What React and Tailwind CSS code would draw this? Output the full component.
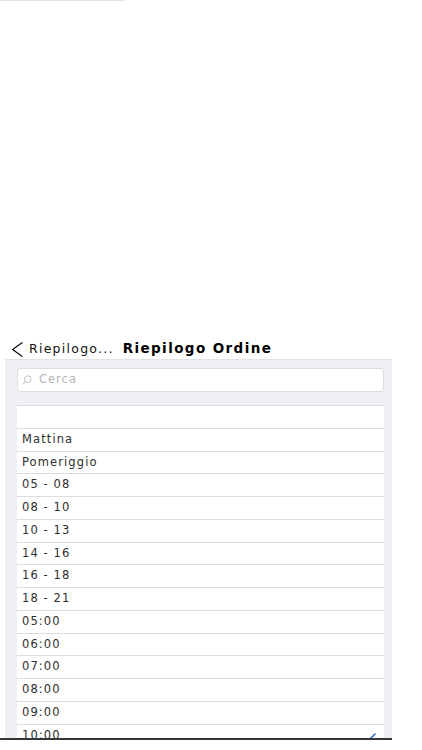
import React from 'react';

const rows = [
    '',
    'Mattina',
    'Pomeriggio',
    '05 - 08',
    '08 - 10',
    '10 - 13',
    '14 - 16',
    '16 - 18',
    '18 - 21',
    '05:00',
    '06:00',
    '07:00',
    '08:00',
    '09:00',
    '10:00',
];

const font = { fontFamily: '"DejaVu Sans", Verdana, sans-serif' };

export default function App() {
    return (
        <div className="w-[422px] h-[750px] bg-white overflow-hidden flex flex-col" style={font}>
            <div className="h-px w-[125px] bg-[#e4e4e4]" />

            {/* nav bar */}
            <div className="mt-[338px] h-[20px] flex items-center">
                <svg className="ml-[11px] w-[12px] h-[15px]" viewBox="0 0 12 15" fill="none">
                    <path d="M11 0.8 L1.6 7.5 L11 14.2" stroke="#111" strokeWidth="1.3" strokeLinecap="round" strokeLinejoin="round" />
                </svg>
                <span className="ml-[6px] text-[12.5px] tracking-[1.25px] text-[#111] leading-none">Riepilogo...</span>
                <span className="ml-[9px] text-[13.5px] font-bold tracking-[1.4px] text-black leading-none">Riepilogo Ordine</span>
            </div>

            {/* grouped panel */}
            <div className="ml-[5px] w-[387px] h-[379px] bg-[#efeff4] border-t border-[#e2e2e8] pl-[12px] pr-[8px] pt-[8px] overflow-hidden">
                <div className="h-[24px] bg-white border border-[#dddde2] rounded-[3px] flex items-center pl-[4px]">
                    <svg className="w-[10px] h-[10px]" viewBox="0 0 10 10" fill="none">
                        <circle cx="5.8" cy="4.2" r="3.4" stroke="#b8b8bc" strokeWidth="0.9" />
                        <path d="M3.4 6.6 L0.8 9.2" stroke="#b8b8bc" strokeWidth="0.9" strokeLinecap="round" />
                    </svg>
                    <span className="ml-[7px] text-[11.5px] tracking-[1px] text-[#b4b4b8] leading-none">Cerca</span>
                </div>

                <div className="mt-[13px] bg-white border-t border-[#dcdcdf]">
                    {rows.map((r, i) => (
                        <div key={i} className="relative h-[22.75px] border-b border-[#dcdcdf] flex items-center pl-[5px]">
                            <span className="text-[11.5px] tracking-[1.1px] text-[#2e2e2e] leading-none">{r}</span>
                            {r === '10:00' && (
                                <svg className="absolute right-[8px] top-[8px] w-[14px] h-[11px]" viewBox="0 0 14 11" fill="none">
                                    <path d="M1 6 L4.5 9.5 L13 1" stroke="#3f78c8" strokeWidth="1.7" strokeLinecap="round" strokeLinejoin="round" />
                                </svg>
                            )}
                        </div>
                    ))}
                </div>
            </div>

            <div className="h-[2px] w-[392px] bg-[#33373a]" />
        </div>
    );
}
